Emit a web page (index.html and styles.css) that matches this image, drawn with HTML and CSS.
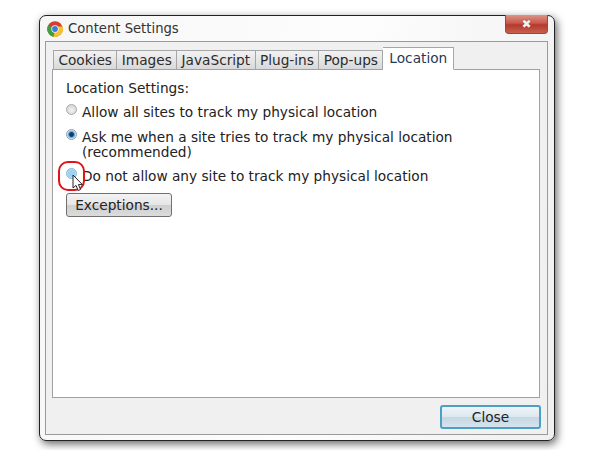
FILE: index.html
```html
<!DOCTYPE html>
<html lang="en">
<head>
<meta charset="utf-8">
<title>Content Settings</title>
<link rel="stylesheet" href="styles.css">
</head>
<body>
<div class="window">
  <div class="titlebar">
    <svg class="logo" width="16" height="16" viewBox="0 0 16 16">
      <circle cx="8" cy="8" r="7.8" fill="#d63f2f"/>
      <path d="M8 8 L1.3 4.2 A7.8 7.8 0 0 0 6.6 15.7 Z" fill="#3f9e3f"/>
      <path d="M8 8 L6.6 15.7 A7.8 7.8 0 0 0 15.5 5.4 L8 5.4 Z" fill="#f2c32c"/>
      <circle cx="8" cy="8" r="3.7" fill="#f4f4f4"/>
      <circle cx="8" cy="8" r="2.9" fill="#3d7fd6"/>
    </svg>
    <span class="title">Content Settings</span>
    <div class="close-x"><span class="x-glyph">&#10006;</span></div>
  </div>
  <div class="client">
    <div class="tabs">
      <div class="tab">Cookies</div>
      <div class="tab">Images</div>
      <div class="tab">JavaScript</div>
      <div class="tab">Plug-ins</div>
      <div class="tab">Pop-ups</div>
      <div class="tab tab-active">Location</div>
    </div>
    <div class="panel">
      <div class="heading">Location Settings:</div>
      <div class="option opt-first"><span class="radio"></span><span class="label">Allow all sites to track my physical location</span></div>
      <div class="option opt-second"><span class="radio radio-on"></span><span class="label">Ask me when a site tries to track my physical location<br>(recommended)</span></div>
      <div class="option opt-third">
        <span class="radio-wrap">
          <span class="radio radio-hover"></span>
          <span class="ring"></span>
          <svg class="cursor" width="13" height="18" viewBox="0 0 13 18"><path d="M1 1 L1 14 L4 11.4 L6.2 16.5 L8.6 15.5 L6.4 10.6 L10.4 10.6 Z" fill="#fff" stroke="#222" stroke-width="1"/></svg>
        </span>
        <span class="label">Do not allow any site to track my physical location</span>
      </div>
      <button class="btn exceptions">Exceptions...</button>
    </div>
    <div class="footer"><button class="btn close">Close</button></div>
  </div>
</div>
</body>
</html>
```

FILE: styles.css
```css
html, body { margin: 0; height: 100%; }
body {
  background: #fff;
  width: 600px;
  height: 450px;
  overflow: hidden;
  padding: 15px 0 0 39px;
  box-sizing: border-box;
  font-family: "DejaVu Sans", sans-serif;
  font-size: 13.7px;
  color: #222;
}
.window {
  width: 516px;
  height: 426px;
  box-sizing: border-box;
  background: linear-gradient(100deg, #f6f6f6 0%, #fdfdfd 55%, #f0f0f0 100%);
  border: 1px solid #222;
  border-radius: 7px;
  box-shadow: 2px 3px 9px rgba(0,0,0,.6);
  padding: 0 6px 5px 5px;
  display: flex;
  flex-direction: column;
}
.titlebar {
  height: 25px;
  display: flex;
  align-items: center;
  position: relative;
  padding-left: 2px;
  flex: none;
}
.logo { flex: none; margin-right: 5px; }
.title { font-size: 13.2px; color: #333; }
.close-x {
  position: absolute;
  right: 0;
  top: -1px;
  width: 43px;
  height: 19px;
  box-sizing: border-box;
  background: linear-gradient(#dd9488 0%, #c9584b 45%, #b23a2c 55%, #c9604f 100%);
  border: 1px solid #8e4a44;
  border-top: none;
  border-radius: 0 0 4px 4px;
  display: flex;
  align-items: center;
  justify-content: center;
}
.x-glyph { color: #f4f0ee; font-size: 12px; line-height: 1; text-shadow: 0 0 1px #6a2a22; }
.client {
  flex: 1;
  background: #f0f0f0;
  border: 1px solid #9a9a9a;
  padding: 3px 7px 0 6px;
  display: flex;
  flex-direction: column;
  min-height: 0;
}
.tabs { display: flex; align-items: flex-end; height: 25px; flex: none; position: relative; z-index: 1; margin: 0 0 -1px 1px; }
.tab {
  height: 20px;
  box-sizing: border-box;
  border: 1px solid #a6a6a6;
  border-left-width: 0;
  border-bottom: 1px solid #a0a0a0;
  background: linear-gradient(#f2f2f2, #d9d9d9);
  padding: 0 4.4px;
  line-height: 19px;
  color: #2c2c2c;
}
.tab:first-child { border-left-width: 1px; }
.tab-active {
  height: 23px;
  background: #fff;
  border-bottom-color: #fff;
  padding: 0 6px;
  line-height: 20px;
  color: #1f3a55;
}
.panel {
  height: 329px;
  flex: none;
  box-sizing: border-box;
  background: #fff;
  border: 1px solid #a0a0a0;
  padding: 11px 13px;
}
.heading { line-height: 15px; margin-bottom: 9px; }
.option { display: flex; align-items: flex-start; line-height: 15px; }
.opt-second { margin-top: 10px; }
.opt-third { margin-top: 9px; }
.label { margin-left: 4px; }
.radio-wrap { position: relative; display: block; width: 12px; height: 11px; flex: none; }
.radio {
  display: block;
  width: 11px;
  height: 11px;
  box-sizing: border-box;
  flex: none;
  margin-right: 1px;
  border-radius: 50%;
  margin-top: -1px;
  border: 1px solid #a8a8a8;
  background: radial-gradient(circle at 50% 60%, #f2f2f2, #cecece);
}
.radio-on { background: radial-gradient(circle, #0c3f76 0 30%, #5fa0d0 45%, #e8eef4 70%); border-color: #8aa0b0; }
.radio-hover { background: radial-gradient(circle, #9fd2ef 0 55%, #d5ecf8 80%); border-color: #7db7d8; }
.ring {
  position: absolute;
  left: -8px;
  top: -8px;
  width: 27px;
  height: 30px;
  box-sizing: border-box;
  border: 2px solid #e0141c;
  border-radius: 10px;
}
.cursor { position: absolute; left: 6px; top: 5px; }
.btn {
  font-family: inherit;
  font-size: 13.7px;
  color: #222;
  box-sizing: border-box;
  background: linear-gradient(#f3f3f3 0%, #e6e6e6 48%, #cfcfcf 52%, #dcdcdc 100%);
  border: 1px solid #707070;
  border-radius: 3px;
  padding: 0;
  display: block;
}
.exceptions { width: 106px; height: 24px; margin-top: 9px; }
.footer { flex: 1; display: flex; justify-content: flex-end; align-items: flex-start; padding: 7px 0 0; margin-right: -1px; }
.close {
  width: 101px;
  height: 24px;
  border: 2px solid #4e9fc4;
  background: linear-gradient(#eef4f8 0%, #dde8ef 48%, #c6d8e4 52%, #d5e3ec 100%);
}
```
